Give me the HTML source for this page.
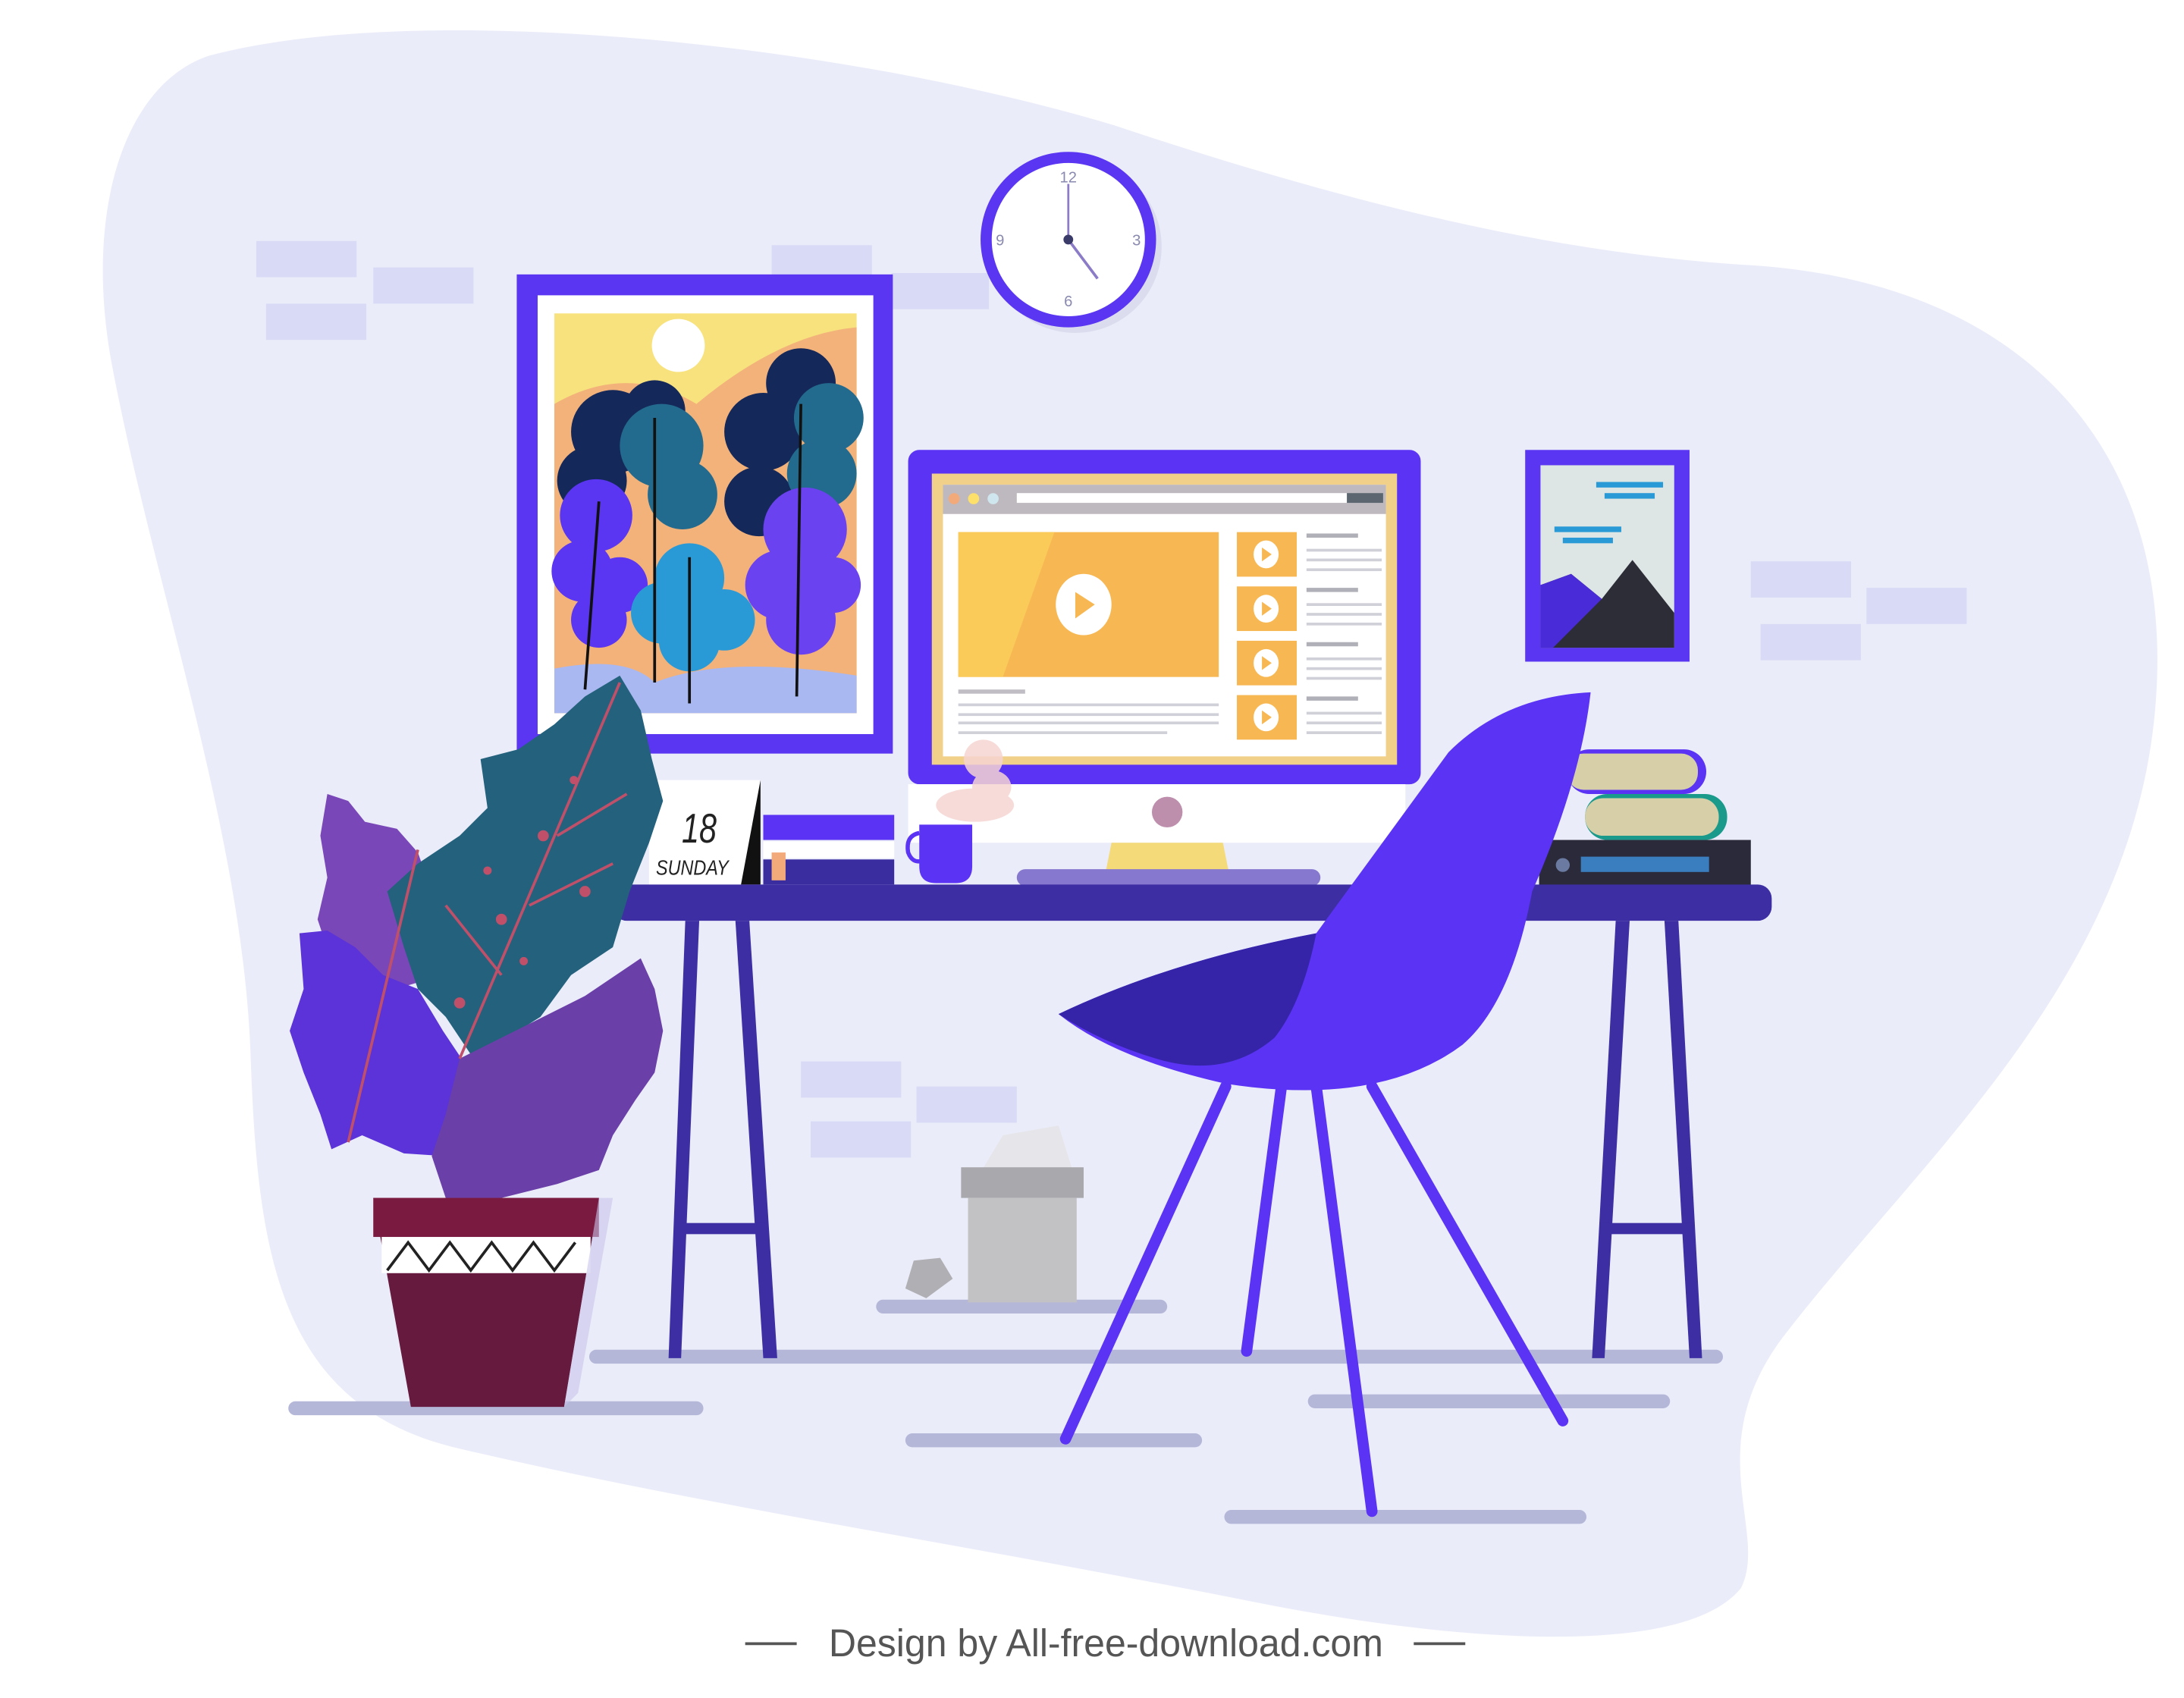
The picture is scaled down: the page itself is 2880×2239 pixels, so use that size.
<!DOCTYPE html>
<html><head><style>html,body{margin:0;padding:0;background:#fff}svg{display:block}</style></head>
<body>
<svg width="2880" height="2239" viewBox="0 0 1568 1219" preserveAspectRatio="none" xmlns="http://www.w3.org/2000/svg">
<rect width="1568" height="1219" fill="#fff"/>
<path d="M150 40 C300 0 600 30 800 90 C950 140 1100 180 1250 190 C1450 200 1560 320 1548 500 C1535 700 1380 830 1280 960 C1220 1040 1270 1100 1250 1140 C1210 1190 1050 1180 900 1150 C700 1110 500 1080 330 1040 C200 1010 185 900 180 760 C175 600 110 420 80 260 C60 150 90 60 150 40 Z" fill="#eaecf9"/>
<g fill="#d9dbf6">
<rect x="184" y="173" width="72" height="26"/><rect x="268" y="192" width="72" height="26"/><rect x="191" y="218" width="72" height="26"/>
<rect x="554" y="176" width="72" height="24"/><rect x="640" y="196" width="70" height="26"/>
<rect x="1257" y="403" width="72" height="26"/><rect x="1340" y="422" width="72" height="26"/><rect x="1264" y="448" width="72" height="26"/>
<rect x="575" y="762" width="72" height="26"/><rect x="658" y="780" width="72" height="26"/><rect x="582" y="805" width="72" height="26"/>
</g>
<g stroke="#b5b7d9" stroke-width="10" stroke-linecap="round">
<line x1="212" y1="1011" x2="500" y2="1011"/><line x1="428" y1="974" x2="1232" y2="974"/>
<line x1="944" y1="1006" x2="1194" y2="1006"/><line x1="655" y1="1034" x2="858" y2="1034"/>
<line x1="884" y1="1089" x2="1134" y2="1089"/><line x1="634" y1="938" x2="833" y2="938"/>
</g>
<circle cx="772" cy="177" r="62" fill="#dcdcef"/>
<circle cx="767" cy="172" r="63" fill="#5a36f2"/>
<circle cx="767" cy="172" r="55" fill="#fff"/>
<g font-family="Liberation Sans,sans-serif" font-size="11" fill="#8a8ab0" text-anchor="middle">
<text x="767" y="131">12</text><text x="816" y="176">3</text><text x="767" y="220">6</text><text x="718" y="176">9</text></g>
<line x1="767" y1="172" x2="767" y2="132" stroke="#8c7cc8" stroke-width="1.5"/>
<line x1="767" y1="172" x2="788" y2="200" stroke="#8c7cc8" stroke-width="2"/>
<circle cx="767" cy="172" r="3.5" fill="#3b3b6a"/>
<rect x="371" y="197" width="270" height="344" fill="#5a36f2"/>
<rect x="386" y="212" width="241" height="315" fill="#fff"/>
<rect x="398" y="225" width="217" height="287" fill="#f7e27e"/>
<path d="M398 290 Q450 260 500 290 Q560 240 615 235 L615 512 L398 512Z" fill="#f3b27a"/>
<circle cx="487" cy="248" r="19" fill="#fff"/>
<g fill="#14285a"><circle cx="440" cy="310" r="30"/><circle cx="470" cy="295" r="22"/><circle cx="425" cy="345" r="25"/><circle cx="575" cy="275" r="25"/><circle cx="548" cy="310" r="28"/><circle cx="545" cy="360" r="25"/></g>
<g fill="#236b8e"><circle cx="475" cy="320" r="30"/><circle cx="490" cy="355" r="25"/><circle cx="595" cy="300" r="25"/><circle cx="590" cy="340" r="25"/></g>
<g fill="#5a36f2"><circle cx="428" cy="370" r="26"/><circle cx="418" cy="410" r="22"/><circle cx="445" cy="420" r="20"/><circle cx="430" cy="445" r="20"/></g>
<g fill="#6b42f0"><circle cx="578" cy="380" r="30"/><circle cx="560" cy="420" r="25"/><circle cx="598" cy="420" r="20"/><circle cx="575" cy="445" r="25"/></g>
<g fill="#2a9ad6"><circle cx="495" cy="415" r="25"/><circle cx="475" cy="440" r="22"/><circle cx="520" cy="445" r="22"/><circle cx="495" cy="460" r="22"/></g>
<path d="M398 480 Q450 470 470 490 Q520 470 615 485 L615 512 L398 512Z" fill="#a9b8f0"/>
<g stroke="#111" stroke-width="2"><line x1="470" y1="300" x2="470" y2="490"/><line x1="575" y1="290" x2="572" y2="500"/><line x1="430" y1="360" x2="420" y2="495"/><line x1="495" y1="400" x2="495" y2="505"/></g>
<rect x="1095" y="323" width="118" height="152" fill="#5a36f2"/>
<rect x="1106" y="334" width="96" height="131" fill="#dde6e4"/>
<path d="M1106 465 L1106 420 L1128 412 L1150 430 L1172 402 L1202 440 L1202 465Z" fill="#2d2d38"/>
<path d="M1106 465 L1106 420 L1128 412 L1150 430 L1115 465Z" fill="#4a2bd8"/>
<g fill="#2a9ad6"><rect x="1146" y="346" width="48" height="4"/><rect x="1152" y="354" width="36" height="4"/><rect x="1116" y="378" width="48" height="4"/><rect x="1122" y="386" width="36" height="4"/></g>
<rect x="652" y="323" width="368" height="240" rx="8" fill="#5a33f5"/>
<rect x="669" y="340" width="334" height="209" fill="#f1d08a"/>
<rect x="677" y="348" width="318" height="195" fill="#fff"/>
<rect x="677" y="348" width="318" height="21" fill="#beb9bf"/>
<circle cx="685" cy="358" r="4" fill="#f3aa7a"/><circle cx="699" cy="358" r="4" fill="#fde06a"/><circle cx="713" cy="358" r="4" fill="#cfe6ee"/>
<rect x="730" y="354" width="237" height="7" fill="#fff"/><rect x="967" y="354" width="26" height="7" fill="#5b6670"/>
<rect x="688" y="382" width="187" height="104" fill="#f7b854"/>
<path d="M688 382 L757 382 L720 486 L688 486Z" fill="#fbcb5a"/>
<ellipse cx="778" cy="434" rx="20" ry="22" fill="#fff"/>
<path d="M772 425 L786 434 L772 444Z" fill="#f7b854"/>
<g fill="#f7b854"><rect x="888" y="382" width="43" height="32"/><rect x="888" y="421" width="43" height="32"/><rect x="888" y="460" width="43" height="32"/><rect x="888" y="499" width="43" height="32"/></g>
<g fill="#fff"><ellipse cx="909" cy="398" rx="9" ry="10"/><ellipse cx="909" cy="437" rx="9" ry="10"/><ellipse cx="909" cy="476" rx="9" ry="10"/><ellipse cx="909" cy="515" rx="9" ry="10"/></g>
<g fill="#f7b854"><path d="M906 393 L913 398 L906 403Z"/><path d="M906 432 L913 437 L906 442Z"/><path d="M906 471 L913 476 L906 481Z"/><path d="M906 510 L913 515 L906 520Z"/></g>
<g fill="#cfd0d8"><rect x="938" y="383" width="37" height="3" fill="#b0b0b8"/><rect x="938" y="394" width="54" height="2"/><rect x="938" y="401" width="54" height="2"/><rect x="938" y="408" width="54" height="2"/>
<rect x="938" y="422" width="37" height="3" fill="#b0b0b8"/><rect x="938" y="433" width="54" height="2"/><rect x="938" y="440" width="54" height="2"/><rect x="938" y="447" width="54" height="2"/>
<rect x="938" y="461" width="37" height="3" fill="#b0b0b8"/><rect x="938" y="472" width="54" height="2"/><rect x="938" y="479" width="54" height="2"/><rect x="938" y="486" width="54" height="2"/>
<rect x="938" y="500" width="37" height="3" fill="#b0b0b8"/><rect x="938" y="511" width="54" height="2"/><rect x="938" y="518" width="54" height="2"/><rect x="938" y="525" width="54" height="2"/>
<rect x="688" y="495" width="48" height="3" fill="#c0bec4"/><rect x="688" y="505" width="187" height="2"/><rect x="688" y="512" width="187" height="2"/><rect x="688" y="518" width="187" height="2"/><rect x="688" y="525" width="150" height="2"/></g>
<rect x="652" y="563" width="357" height="42" fill="#fff"/>
<ellipse cx="838" cy="583" rx="11" ry="11" fill="#bd8fad"/>
<path d="M798 605 L878 605 L882 625 L794 625Z" fill="#f5da7a"/>
<rect x="730" y="624" width="218" height="12" rx="6" fill="#8678cf"/>
<g fill="#f6d5d2" opacity="0.85"><ellipse cx="706" cy="545" rx="14" ry="14"/><ellipse cx="712" cy="565" rx="14" ry="12"/><ellipse cx="700" cy="578" rx="28" ry="12"/></g>
<path d="M660 592 L698 592 L698 622 Q698 634 686 634 L672 634 Q660 634 660 622Z" fill="#5a33f5"/>
<path d="M660 598 Q650 600 652 612 Q655 620 662 618" stroke="#5a33f5" stroke-width="3" fill="none"/>
<path d="M466 560 L546 560 L537 635 L466 635Z" fill="#fff"/>
<path d="M546 560 L532 635 L546 635Z" fill="#111"/>
<text x="502" y="605" font-family="Liberation Sans,sans-serif" font-style="italic" font-size="30" fill="#222" text-anchor="middle" transform="translate(502 605) scale(0.75 1) translate(-502 -605)">18</text>
<text x="497" y="628" font-family="Liberation Sans,sans-serif" font-style="italic" font-size="15" fill="#222" text-anchor="middle" transform="translate(497 628) scale(0.85 1) translate(-497 -628)">SUNDAY</text>
<rect x="548" y="585" width="94" height="18" fill="#5a33f5"/><rect x="548" y="604" width="94" height="12" fill="#fff"/><rect x="548" y="617" width="94" height="18" fill="#3a2da0"/>
<rect x="554" y="612" width="10" height="20" fill="#f3aa7a"/>
<rect x="1105" y="603" width="152" height="33" fill="#2a2a3a"/>
<rect x="1135" y="615" width="92" height="11" fill="#3b7ec0"/><circle cx="1122" cy="621" r="5" fill="#6a7aa0"/>
<rect x="1138" y="570" width="102" height="33" rx="16" fill="#1a9a8a"/><rect x="1138" y="573" width="96" height="27" rx="13" fill="#d6cfa8"/>
<rect x="1125" y="538" width="100" height="32" rx="16" fill="#5a33f5"/><rect x="1125" y="541" width="94" height="26" rx="12" fill="#d6cfa8"/>
<rect x="440" y="635" width="832" height="26" rx="10" fill="#3d2fa3"/>
<g fill="#3d2fa3">
<path d="M492 661 L502 661 L489 975 L480 975Z"/><path d="M528 661 L538 661 L558 975 L548 975Z"/><rect x="490" y="878" width="60" height="8"/>
<path d="M1160 661 L1170 661 L1152 975 L1143 975Z"/><path d="M1195 661 L1205 661 L1222 975 L1213 975Z"/><rect x="1150" y="878" width="65" height="8"/>
</g>
<path d="M720 815 L760 808 L770 840 L705 840Z" fill="#e6e6ea"/>
<rect x="690" y="838" width="88" height="22" fill="#a9a9ad"/>
<rect x="695" y="860" width="78" height="75" fill="#c2c2c5"/>
<path d="M650 925 L656 905 L675 903 L684 918 L665 932Z" fill="#b0b0b4"/>
<g stroke="#5a33f5" stroke-width="8" stroke-linecap="round">
<line x1="880" y1="780" x2="765" y2="1033"/><line x1="920" y1="780" x2="895" y2="970"/>
<line x1="945" y1="780" x2="985" y2="1085"/><line x1="985" y1="780" x2="1122" y2="1020"/>
</g>
<path d="M760 728 Q840 690 945 670 L1040 540 Q1080 500 1142 497 Q1135 560 1100 640 Q1085 720 1050 750 Q990 795 880 778 Q800 760 760 728Z" fill="#5a33f5"/>
<path d="M760 728 Q840 690 945 670 Q935 720 915 745 Q880 775 830 760 Q790 748 760 728Z" fill="#3524a8"/>
<path d="M235 570 L250 575 L262 590 L285 595 L300 612 L310 640 L318 700 L250 720 L238 690 L228 660 L235 630 L230 600Z" fill="#7a47b8"/>
<path d="M215 670 L235 668 L255 680 L275 700 L300 710 L318 740 L338 770 L332 800 L320 830 L290 828 L260 815 L238 825 L230 800 L218 770 L208 740 L218 710Z" fill="#5b33d8"/>
<path d="M345 545 L372 538 L398 520 L420 500 L445 485 L460 510 L468 545 L476 575 L466 605 L452 640 L440 680 L410 700 L388 730 L340 760 L320 730 L300 710 L290 680 L278 640 L300 620 L330 600 L350 580Z" fill="#24617c"/>
<path d="M330 760 L360 745 L390 730 L420 715 L460 688 L470 710 L476 740 L470 770 L456 790 L440 815 L430 840 L400 850 L360 860 L320 860 L310 830 L320 800Z" fill="#6b3fa8"/>
<g fill="#c0506a"><circle cx="390" cy="600" r="4"/><circle cx="420" cy="640" r="4"/><circle cx="360" cy="660" r="4"/><circle cx="330" cy="720" r="4"/><circle cx="412" cy="560" r="3"/><circle cx="376" cy="690" r="3"/><circle cx="350" cy="625" r="3"/></g>
<g stroke="#c0506a" stroke-width="2" fill="none"><path d="M445 490 L330 760"/><path d="M300 610 L250 820"/><path d="M400 600 L450 570"/><path d="M380 650 L440 620"/><path d="M360 700 L320 650"/></g>
<path d="M268 860 L430 860 L405 1010 L295 1010Z" fill="#651a3e"/>
<rect x="268" y="860" width="162" height="28" fill="#7a1a40"/>
<rect x="274" y="888" width="150" height="26" fill="#fff"/>
<path d="M278 912 L293 892 L308 912 L323 892 L338 912 L353 892 L368 912 L383 892 L398 912 L413 892" stroke="#222" stroke-width="2" fill="none"/>
<path d="M430 860 L440 860 L415 1000 L405 1010Z" fill="#c8c4ea" opacity="0.6"/>
<line x1="535" y1="1180" x2="572" y2="1180" stroke="#555" stroke-width="2"/>
<line x1="1015" y1="1180" x2="1052" y2="1180" stroke="#555" stroke-width="2"/>
<text x="794" y="1189" font-family="Liberation Sans,sans-serif" font-size="28" fill="#555" text-anchor="middle" textLength="398" lengthAdjust="spacingAndGlyphs">Design by All-free-download.com</text>
</svg>
</body></html>
